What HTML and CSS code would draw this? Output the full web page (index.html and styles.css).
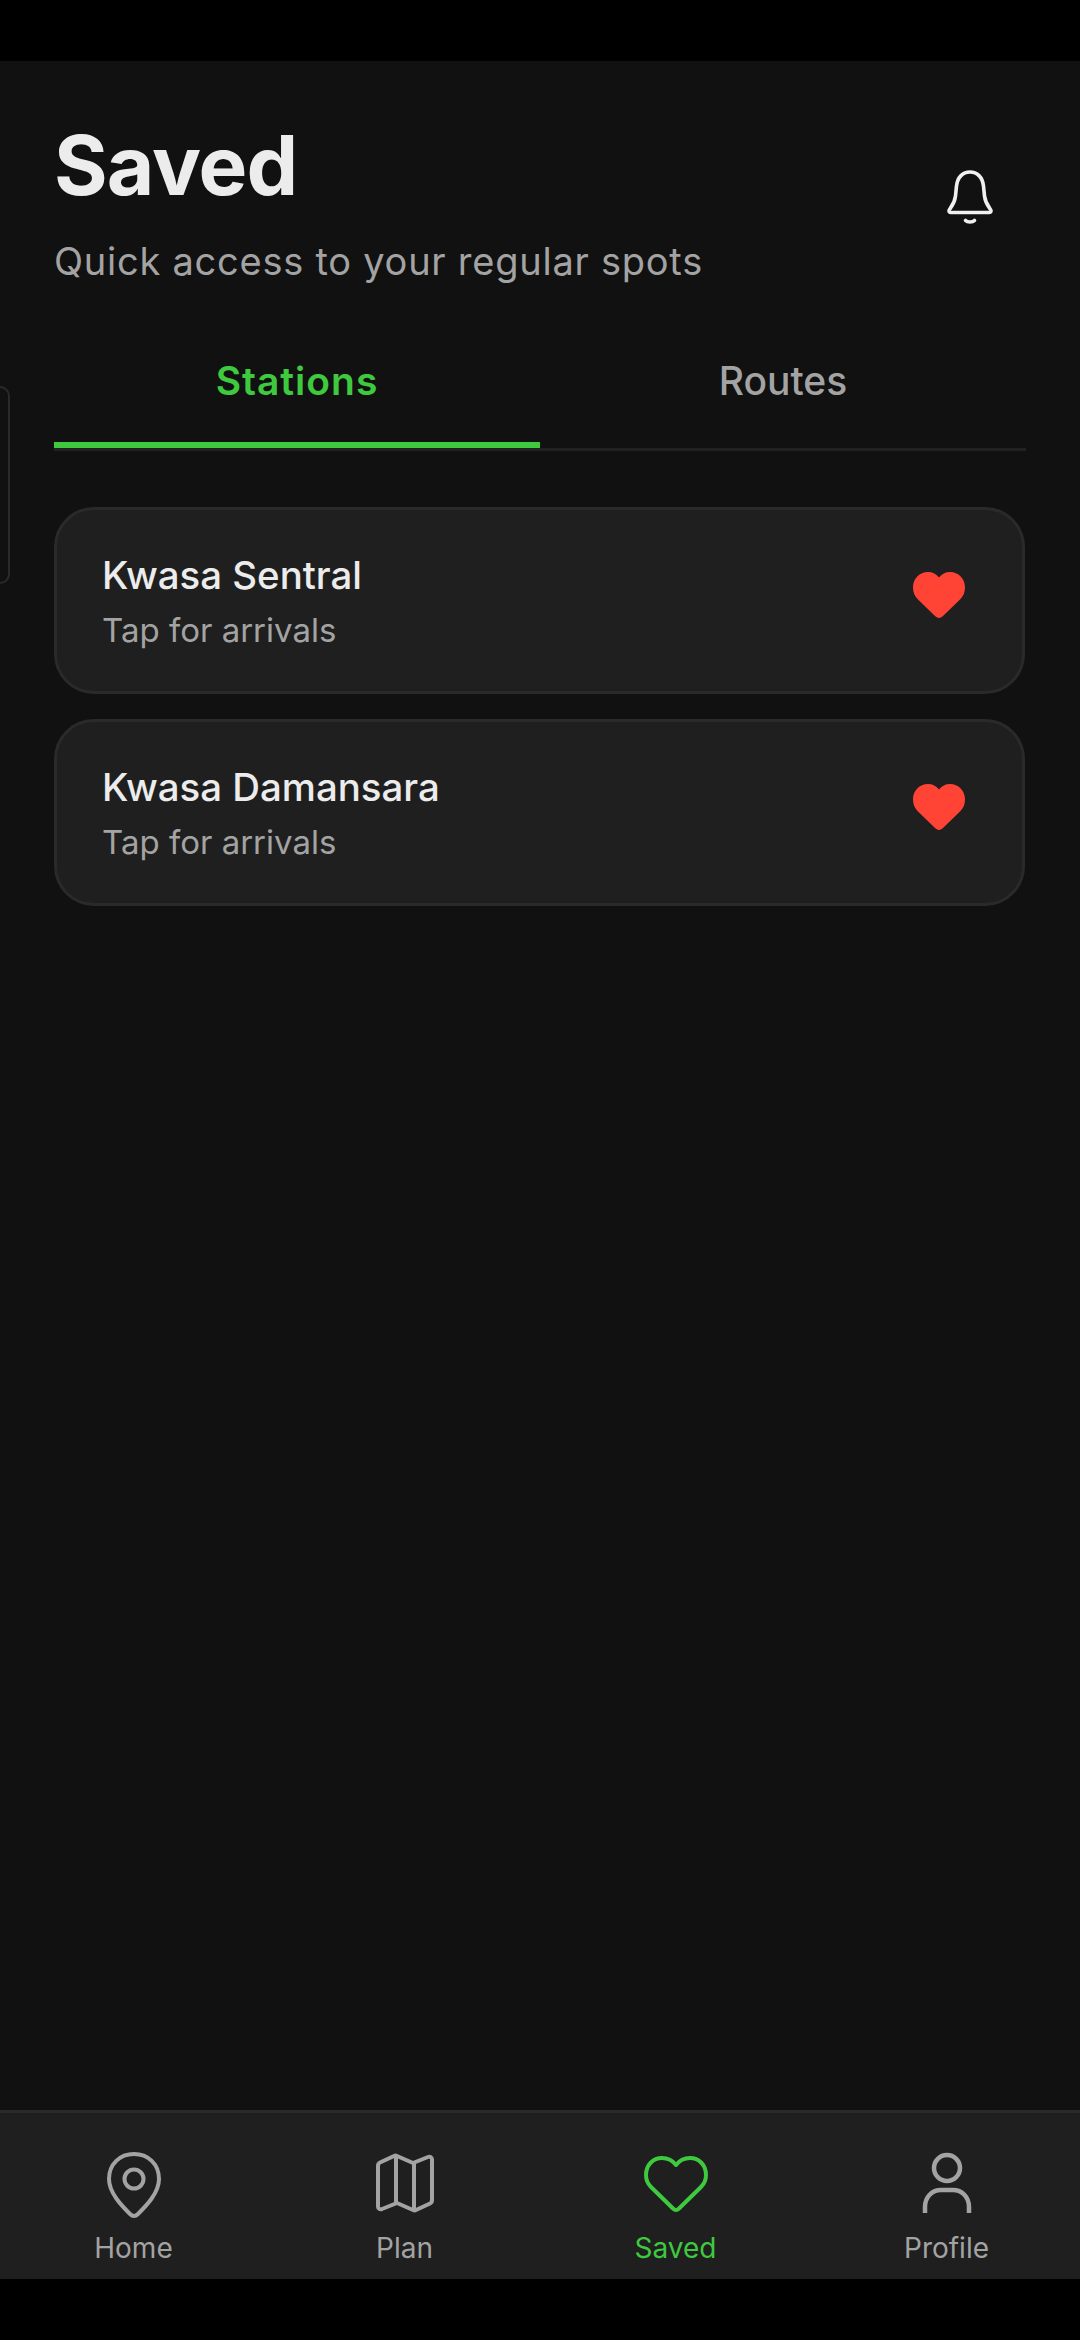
FILE: index.html
```html
<!DOCTYPE html>
<html lang="en">
<head>
<meta charset="utf-8">
<title>Saved</title>
<link rel="stylesheet" href="styles.css">
</head>
<body>
<div class="screen">
  <div class="status"></div>
  <main class="main">
    <div class="edge-peek"></div>
    <header class="header">
      <div class="head-text">
        <h1 class="title">Saved</h1>
        <p class="subtitle">Quick access to your regular spots</p>
      </div>
      <svg class="bell" viewBox="0 0 48 56" fill="none" stroke="#f0f0f0" stroke-width="3.6" stroke-linecap="round" stroke-linejoin="round">
        <path d="M3 41.500C3 40 8.500 36 9.500 27L10.500 17C11.500 8 17 3 24 3C31 3 36.500 8 37.500 17L38.500 27C39.500 36 45 40 45 41.500C45 43 44 43.500 43 43.500H5C4 43.500 3 43 3 41.500Z"/>
        <path d="M19.500 51.500C21.500 53.500 26.500 53.500 28.500 51.500"/>
      </svg>
    </header>
    <nav class="tabs">
      <div class="tab tab-active">Stations</div>
      <div class="tab">Routes</div>
    </nav>
    <section class="cards">
      <article class="card">
        <div>
          <div class="card-name">Kwasa Sentral</div>
          <div class="card-sub">Tap for arrivals</div>
        </div>
        <svg class="fav" viewBox="0 0 52 46"><path fill="#ff4436" d="M26 46C24.500 46 23 45 21.500 43.500L5 27.500C1.500 24 0 20 0 15.500C0 6.500 6.500 0 15 0C19.500 0 23.500 2 26 5.500C28.500 2 32.500 0 37 0C45.500 0 52 6.500 52 15.500C52 20 50.500 24 47 27.500L30.500 43.500C29 45 27.500 46 26 46Z"/></svg>
      </article>
      <article class="card">
        <div>
          <div class="card-name">Kwasa Damansara</div>
          <div class="card-sub">Tap for arrivals</div>
        </div>
        <svg class="fav" viewBox="0 0 52 46"><path fill="#ff4436" d="M26 46C24.500 46 23 45 21.500 43.500L5 27.500C1.500 24 0 20 0 15.500C0 6.500 6.500 0 15 0C19.500 0 23.500 2 26 5.500C28.500 2 32.500 0 37 0C45.500 0 52 6.500 52 15.500C52 20 50.500 24 47 27.500L30.500 43.500C29 45 27.500 46 26 46Z"/></svg>
      </article>
    </section>
  </main>
  <footer class="bottom-nav">
    <div class="nav-item">
      <svg class="nav-icon" viewBox="0 0 64 68" fill="none" stroke="#a3a3a3" stroke-width="4" stroke-linejoin="round"><path d="M32 65C30 65 29 64 28 63C20 55 7 42 7 28C7 13 18 3 32 3C46 3 57 13 57 28C57 42 44 55 36 63C35 64 34 65 32 65Z"/><circle cx="32" cy="28" r="9.500"/></svg>
      <span class="nav-label">Home</span>
    </div>
    <div class="nav-item">
      <svg class="nav-icon" viewBox="0 0 64 68" fill="none" stroke="#a3a3a3" stroke-width="4" stroke-linejoin="round"><path d="M5 15C5 13 6 12 7 11.500L21 5C22 4.500 23 4.500 24 5L40 12L55 6C57 5 59 6.500 59 8.500V49C59 51 58 52 57 52.500L43 59C42 59.500 41 59.500 40 59L24 52L9 58C7 59 5 57.500 5 55.500Z"/><path d="M23 5V52M41 12V59"/></svg>
      <span class="nav-label">Plan</span>
    </div>
    <div class="nav-item nav-active">
      <svg class="nav-icon" viewBox="0 0 64 68" fill="none" stroke="#3ec93e" stroke-width="4" stroke-linejoin="round"><path d="M32 59C31 59 30 58.500 29 57.500L7 36C3 32 2 28 2 24C2 14 9 7 18 7C24 7 29 10 32 14C35 10 40 7 46 7C55 7 62 14 62 24C62 28 61 32 57 36L35 57.500C34 58.500 33 59 32 59Z"/></svg>
      <span class="nav-label">Saved</span>
    </div>
    <div class="nav-item">
      <svg class="nav-icon" viewBox="0 0 64 68" fill="none" stroke="#a3a3a3" stroke-width="4.500"><circle cx="32" cy="17" r="13"/><path d="M10 62V56C10 46 17 39 26 39H38C47 39 54 46 54 56V62"/></svg>
      <span class="nav-label">Profile</span>
    </div>
  </footer>
  <div class="status-bottom"></div>
</div>
</body>
</html>
```
FILE: styles.css
```css
* { box-sizing: border-box; margin: 0; padding: 0; }
html, body { width: 1080px; height: 2340px; background: #000; overflow: hidden; }
body { font-family: "Inter", "Liberation Sans", sans-serif; }
.screen { width: 1080px; height: 2340px; display: flex; flex-direction: column; }
.status { height: 61px; background: #000; flex: none; }
.status-bottom { height: 61px; background: #000; flex: none; }
.main { flex: 1; background: #111; position: relative; padding: 65px 54px 0 54px; }
.edge-peek { position: absolute; left: -20px; top: 325px; width: 30px; height: 198px; border: 2px solid #2a2a2a; border-radius: 10px; }
.header { display: flex; justify-content: space-between; align-items: flex-start; height: 208px; }
.title { font-size: 82px; line-height: 80px; font-weight: 700; color: #ececec; letter-spacing: -1px; }
.subtitle { font-size: 38px; line-height: 48px; color: #a3a3a3; margin-top: 31px; letter-spacing: 0.75px; }
.bell { width: 48px; height: 56px; margin: 43px 32px 0 0; }
.tabs { display: flex; height: 104px; border-bottom: 3px solid #222; margin-top: 13px; width: 972px; }
.tab { flex: 1; text-align: center; font-size: 39px; line-height: 46px; font-weight: 500; color: #a3a3a3; padding-top: 11px; height: 101px; }
.tab-active { color: #3ec93e; font-weight: 600; border-bottom: 6px solid #3ec93e; letter-spacing: 1px; }
.cards { display: flex; flex-direction: column; gap: 25px; margin-top: 56px; width: 971px; }
.card { height: 187px; background: #1f1f1f; border: 3px solid #2a2a2a; border-radius: 40px; padding: 0 57px 0 45px; display: flex; justify-content: space-between; align-items: center; }
.card-name { font-size: 38.4px; line-height: 46px; font-weight: 500; color: #ececec; }
.card-sub { font-size: 33px; line-height: 40px; color: #a3a3a3; margin-top: 12px; }
.fav { width: 52px; height: 46px; margin-top: -12px; }
.bottom-nav { height: 169px; flex: none; background: #1f1f1f; border-top: 3px solid #2a2a2a; display: grid; grid-template-columns: repeat(4, 271px); justify-content: center; }
.nav-item { display: flex; flex-direction: column; align-items: center; padding-top: 38px; }
.nav-icon { width: 64px; height: 68px; }
.nav-label { font-size: 28px; line-height: 36px; color: #a3a3a3; margin-top: 11px; }
.nav-active .nav-label { color: #3ec93e; }
```
